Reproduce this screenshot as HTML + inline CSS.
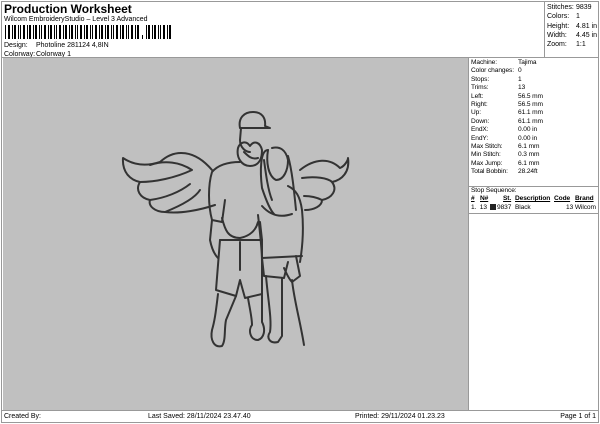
<!DOCTYPE html>
<html><head><meta charset="utf-8"><style>
*{margin:0;padding:0;box-sizing:border-box}
body{width:600px;height:424px;background:#fff;font-family:"Liberation Sans",sans-serif;color:#000;position:relative;overflow:hidden;font-size:7px}
.a{position:absolute;white-space:nowrap}
.s{font-size:6.6px;letter-spacing:-0.1px}
</style></head><body>
<div class="a" style="left:1px;top:1px;width:598px;height:422px;border:1px solid #999"></div>
<div class="a" style="left:4px;top:2px;font-size:12px;font-weight:bold">Production Worksheet</div>
<div class="a" style="left:4px;top:16px;font-size:7px">Wilcom EmbroideryStudio – Level 3 Advanced</div>
<svg class="a" style="left:5px;top:25px" width="170" height="16">
<g fill="#000">
<rect x="0" y="0" width="1" height="14"/><rect x="3" y="0" width="2" height="14"/><rect x="7" y="0" width="1" height="14"/><rect x="9" y="0" width="2" height="14"/><rect x="13" y="0" width="1" height="14"/><rect x="15" y="0" width="1" height="14"/><rect x="18" y="0" width="2" height="14"/><rect x="22" y="0" width="1" height="14"/><rect x="24" y="0" width="2" height="14"/><rect x="28" y="0" width="1" height="14"/><rect x="30" y="0" width="2" height="14"/><rect x="34" y="0" width="1" height="14"/><rect x="36" y="0" width="1" height="14"/><rect x="39" y="0" width="2" height="14"/><rect x="43" y="0" width="1" height="14"/><rect x="45" y="0" width="2" height="14"/><rect x="49" y="0" width="1" height="14"/><rect x="51" y="0" width="1" height="14"/><rect x="54" y="0" width="2" height="14"/><rect x="58" y="0" width="1" height="14"/><rect x="60" y="0" width="2" height="14"/><rect x="64" y="0" width="1" height="14"/><rect x="66" y="0" width="2" height="14"/><rect x="70" y="0" width="1" height="14"/><rect x="72" y="0" width="1" height="14"/><rect x="75" y="0" width="2" height="14"/><rect x="79" y="0" width="1" height="14"/><rect x="81" y="0" width="2" height="14"/><rect x="85" y="0" width="1" height="14"/><rect x="87" y="0" width="1" height="14"/><rect x="90" y="0" width="2" height="14"/><rect x="94" y="0" width="1" height="14"/><rect x="96" y="0" width="2" height="14"/><rect x="100" y="0" width="1" height="14"/><rect x="102" y="0" width="2" height="14"/><rect x="106" y="0" width="1" height="14"/><rect x="108" y="0" width="1" height="14"/><rect x="111" y="0" width="2" height="14"/><rect x="115" y="0" width="1" height="14"/><rect x="117" y="0" width="2" height="14"/><rect x="121" y="0" width="1" height="14"/><rect x="123" y="0" width="1" height="14"/><rect x="126" y="0" width="2" height="14"/><rect x="130" y="0" width="1" height="14"/><rect x="132" y="0" width="2" height="14"/>
<rect x="137" y="10" width="1" height="4"/>
<rect x="141" y="0" width="1" height="14"/><rect x="143" y="0" width="2" height="14"/><rect x="147" y="0" width="1" height="14"/><rect x="149" y="0" width="2" height="14"/><rect x="153" y="0" width="1" height="14"/><rect x="155" y="0" width="1" height="14"/><rect x="158" y="0" width="2" height="14"/><rect x="162" y="0" width="1" height="14"/><rect x="164" y="0" width="2" height="14"/>
</g></svg>
<div class="a" style="left:4px;top:42px">Design:</div><div class="a" style="left:36px;top:42px">Photoline 281124 4,8IN</div>
<div class="a" style="left:4px;top:51px">Colorway:</div><div class="a" style="left:36px;top:51px">Colorway 1</div>
<div class="a" style="left:544px;top:1px;width:1px;height:56px;background:#999"></div>
<div class="a" style="left:547px;top:3px;line-height:9.3px">Stitches:<br>Colors:<br>Height:<br>Width:<br>Zoom:</div>
<div class="a" style="left:576px;top:3px;line-height:9.3px">9839<br>1<br>4.81 in<br>4.45 in<br>1:1</div>
<div class="a" style="left:1px;top:57px;width:598px;height:1px;background:#999"></div>
<div class="a" style="left:3px;top:58px;width:465px;height:352px;background:#c0c0c0"></div>
<div class="a" style="left:468px;top:58px;width:1px;height:352px;background:#999"></div>
<div class="a s" style="left:471px;top:59px;line-height:8.4px">Machine:<br>Color changes:<br>Stops:<br>Trims:<br>Left:<br>Right:<br>Up:<br>Down:<br>EndX:<br>EndY:<br>Max Stitch:<br>Min Stitch:<br>Max Jump:<br>Total Bobbin:</div>
<div class="a s" style="left:518px;top:59px;line-height:8.4px">Tajima<br>0<br>1<br>13<br>56.5 mm<br>56.5 mm<br>61.1 mm<br>61.1 mm<br>0.00 in<br>0.00 in<br>6.1 mm<br>0.3 mm<br>6.1 mm<br>28.24ft</div>
<div class="a" style="left:469px;top:186px;width:130px;height:1px;background:#999"></div>
<div class="a s" style="left:471px;top:187px">Stop Sequence:</div>
<div class="a s" style="left:471px;top:195px;font-weight:bold;text-decoration:underline">#</div>
<div class="a s" style="left:480px;top:195px;font-weight:bold;text-decoration:underline">N#</div>
<div class="a s" style="left:503px;top:195px;font-weight:bold;text-decoration:underline">St.</div>
<div class="a s" style="left:515px;top:195px;font-weight:bold;text-decoration:underline">Description</div>
<div class="a s" style="left:554px;top:195px;font-weight:bold;text-decoration:underline">Code</div>
<div class="a s" style="left:575px;top:195px;font-weight:bold;text-decoration:underline">Brand</div>
<div class="a s" style="left:471px;top:204px">1.&nbsp; 13</div>
<div class="a" style="left:490px;top:204px;width:6px;height:6px;background:#222"></div>
<div class="a s" style="left:497px;top:204px">9837</div>
<div class="a s" style="left:515px;top:204px">Black</div>
<div class="a s" style="left:566px;top:204px">13 Wilcom</div>
<div class="a" style="left:469px;top:213px;width:130px;height:1px;background:#999"></div>
<div class="a" style="left:1px;top:410px;width:598px;height:1px;background:#999"></div>
<div class="a" style="left:4px;top:413px">Created By:</div>
<div class="a" style="left:148px;top:413px">Last Saved: 28/11/2024 23.47.40</div>
<div class="a" style="left:355px;top:413px">Printed: 29/11/2024 01.23.23</div>
<div class="a" style="right:4px;top:413px">Page 1 of 1</div>
<svg class="a" style="left:0;top:0" width="600" height="424" fill="none" stroke="#333" stroke-width="2" stroke-linecap="round" stroke-linejoin="round">
<path d="M212 170 C195 150 175 148 160 162 C148 166 135 166 123 158 C122 172 130 180 140 182 C135 190 140 198 150 200 C148 206 155 212 165 212 C180 214 200 210 215 205"/>
<path d="M150 165 C165 160 180 162 192 170 C175 178 155 182 140 182"/>
<path d="M150 200 C165 198 180 192 190 184"/>
<path d="M165 212 C180 206 195 198 200 190"/>
<path d="M300 170 C315 158 330 158 340 168 C345 166 348 160 348 158 C350 172 342 180 332 182 C338 190 332 198 322 200 C322 206 314 210 305 210"/>
<path d="M302 178 C315 176 328 178 332 182"/>
<path d="M304 196 C312 196 318 198 322 200"/>
<path d="M240 128 C238 118 244 112 253 112 C262 112 266 118 265 126 L270 128 L242 128 Z"/>
<path d="M241 128 L240 140 C240 148 246 152 250 152"/>
<path d="M238 148 C236 158 242 166 250 166 C258 166 262 160 262 150 C260 142 254 140 250 146 C246 140 240 142 238 148"/>
<path d="M244 152 C248 156 252 160 258 158"/>
<path d="M240 162 C228 162 218 165 212 172 C208 185 208 205 212 220 L222 222 L225 200"/>
<path d="M212 220 L210 240 C212 250 215 255 218 258"/>
<path d="M222 218 C225 230 228 238 240 238 C250 236 256 230 258 222"/>
<path d="M220 240 L262 240 L260 222"/>
<path d="M220 240 L216 290 L236 296 L240 280 L245 298 L262 294 L262 240"/>
<path d="M240 242 L240 270"/>
<path d="M218 294 C216 310 215 320 212 330 C210 340 214 348 222 346 C226 340 224 330 226 320 L236 296"/>
<path d="M248 298 C250 310 252 318 252 325 C248 330 250 340 258 340 C264 338 266 330 262 322 L262 294"/>
<path d="M268 150 C266 162 268 176 276 180 C284 180 288 170 288 160 C286 150 280 146 272 148"/>
<path d="M268 150 C260 150 260 172 262 188 C266 200 270 210 274 214"/>
<path d="M288 156 C292 170 294 190 296 210"/>
<path d="M264 160 C266 175 268 190 272 200"/>
<path d="M288 186 C296 190 300 196 302 210 C304 230 302 250 300 262"/>
<path d="M258 215 C260 232 262 250 262 262"/>
<path d="M262 206 C270 215 280 218 292 214"/>
<path d="M262 258 L302 256"/>
<path d="M262 258 L264 276 L284 278 L288 262"/>
<path d="M296 256 L300 276 L292 282 C288 278 286 272 284 268"/>
<path d="M266 276 C268 300 272 320 270 332 C266 338 270 344 278 342 L282 336 C282 318 282 296 282 278"/>
<path d="M292 280 C294 300 300 320 304 345"/>
</svg>
</body></html>
